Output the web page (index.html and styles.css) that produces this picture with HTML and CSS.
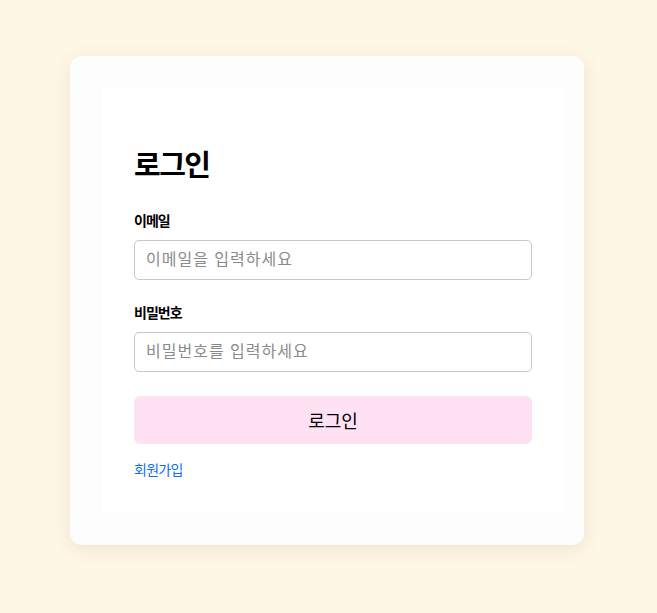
FILE: index.html
```html
<!DOCTYPE html>
<html lang="ko">
<head>
<meta charset="utf-8">
<title>로그인</title>
<link rel="stylesheet" href="styles.css">
</head>
<body>
<div class="card">
  <div class="inner">
    <h1 class="title">로그인</h1>
    <div class="field">
      <label class="label" for="email">이메일</label>
      <input class="input" id="email" type="email" placeholder="이메일을 입력하세요">
    </div>
    <div class="field field-last">
      <label class="label" for="pw">비밀번호</label>
      <input class="input" id="pw" type="password" placeholder="비밀번호를 입력하세요">
    </div>
    <button class="btn" type="button">로그인</button>
    <a class="link" href="#">회원가입</a>
  </div>
</div>
</body>
</html>
```
FILE: styles.css
```css
* { box-sizing: border-box; }
html, body { margin: 0; }
body {
  background: #fef7e5;
  font-family: "Liberation Sans", "Noto Sans CJK KR", sans-serif;
  padding: 56px 0 0 70px;
  min-height: 613px;
}
.card {
  width: 514px;
  background: #fdfdfd;
  border-radius: 12px;
  padding: 32px 20px 32px 32px;
  box-shadow: 0 4px 18px rgba(120, 100, 40, 0.12);
}
.inner {
  background: #ffffff;
  padding: 32px 32px 32px;
  display: flex;
  flex-direction: column;
}
.title {
  margin: 29px 0 28px;
  font-size: 29px;
  line-height: 34px;
  font-weight: 700;
  letter-spacing: -1.5px;
  color: #000;
}
.field {
  display: flex;
  flex-direction: column;
  margin-bottom: 23px;
}
.field-last { margin-bottom: 24px; }
.label {
  font-size: 14px;
  line-height: 20px;
  font-weight: 700;
  letter-spacing: -1px;
  color: #000;
  margin-bottom: 9px;
}
.input {
  height: 40px;
  border: 1px solid #c8c8c8;
  border-radius: 5px;
  padding: 0 11px;
  font-family: inherit;
  font-size: 16px;
  color: #333;
  background: #fff;
}
.input::placeholder { color: #8a8a8a; letter-spacing: 1px; }
.btn {
  height: 48px;
  border: none;
  border-radius: 6px;
  background: #ffe1f4;
  font-family: inherit;
  font-size: 18px;
  color: #000;
  margin-bottom: 16px;
}
.link {
  font-size: 14px;
  line-height: 21px;
  color: #0a6cff;
  letter-spacing: -0.7px;
  text-decoration: none;
  align-self: flex-start;
}
```
